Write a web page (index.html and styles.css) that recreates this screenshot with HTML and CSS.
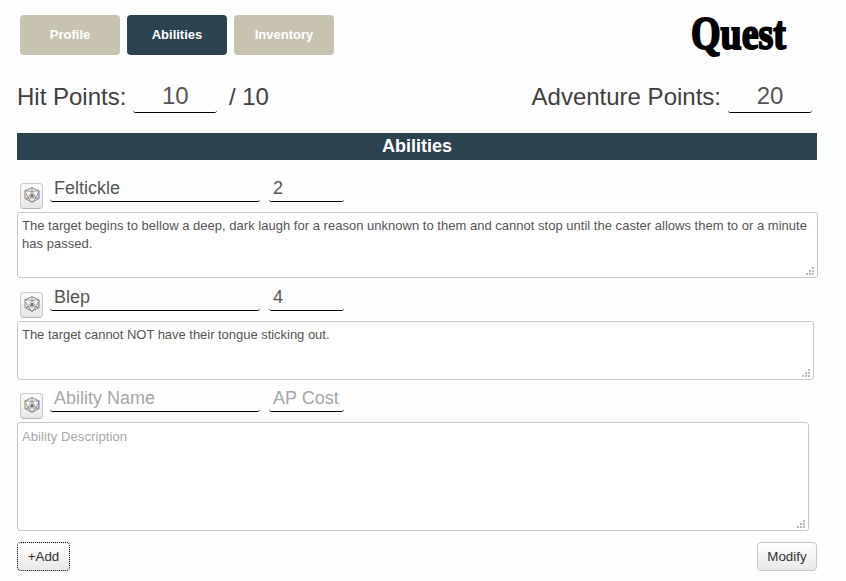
FILE: index.html
```html
<!DOCTYPE html>
<html lang="en">
<head>
<meta charset="utf-8">
<title>Quest</title>
<link rel="stylesheet" href="styles.css">
</head>
<body>
<svg class="defs" aria-hidden="true">
  <symbol id="die" viewBox="0 0 16 16">
    <g fill="none" stroke-width=".8">
      <path stroke="#666" d="M8 .7 15 3.8v7.7L8 15.3 1 11.5V3.8Z"/>
      <path stroke="#858585" d="M8 .7v3.6M1 3.8l7 .5 7-.5M8 4.3 4 11h8ZM1 3.8 4 11l-3 .5M15 3.8 12 11l3 .5M4 11l4 4.3 4-4.3"/>
      <path stroke="#d8c860" d="M1.5 4.5v6.5"/>
      <path stroke="#8890e8" d="M14.5 4.5v6.5"/>
      <path fill="#777" stroke="#555" d="M8 7 6.5 9.6h3Z"/>
    </g>
  </symbol>
  <symbol id="grip" viewBox="0 0 8 8">
    <path fill="#b8b8b8" d="M6 0h2v2H6zM3 3h2v2H3zM6 3h2v2H6zM0 6h2v2H0zM3 6h2v2H3zM6 6h2v2H6z"/>
  </symbol>
</svg>
<main class="sheet">
  <header class="top">
    <nav class="tabs">
      <a class="tab">Profile</a>
      <a class="tab active">Abilities</a>
      <a class="tab">Inventory</a>
    </nav>
    <svg class="logo" viewBox="0 0 98 46" role="img" aria-label="Quest">
      <text x="1" y="34" textLength="95" lengthAdjust="spacingAndGlyphs">Quest</text>
    </svg>
  </header>
  <section class="points">
    <div class="stat"><span>Hit Points:</span><span class="value">10</span><span class="max">/ 10</span></div>
    <div class="stat"><span>Adventure Points:</span><span class="value">20</span></div>
  </section>
  <h1 class="title">Abilities</h1>
  <section class="ability first">
    <div class="row">
      <button class="roll"><svg><use href="#die"/></svg></button>
      <span class="field name">Feltickle</span><span class="field cost">2</span>
    </div>
    <div class="description tall">The target begins to bellow a deep, dark laugh for a reason unknown to them and cannot stop until the caster allows them to or a minute<br>has passed.<svg class="grip"><use href="#grip"/></svg></div>
  </section>
  <section class="ability second">
    <div class="row">
      <button class="roll"><svg><use href="#die"/></svg></button>
      <span class="field name">Blep</span><span class="field cost">4</span>
    </div>
    <div class="description short">The target cannot NOT have their tongue sticking out.<svg class="grip"><use href="#grip"/></svg></div>
  </section>
  <section class="ability third">
    <div class="row">
      <button class="roll"><svg><use href="#die"/></svg></button>
      <span class="field name empty">Ability Name</span><span class="field cost empty">AP Cost</span>
    </div>
    <div class="description blank empty">Ability Description<svg class="grip"><use href="#grip"/></svg></div>
  </section>
  <footer class="actions">
    <button class="btn add">+Add</button>
    <button class="btn modify">Modify</button>
  </footer>
</main>
</body>
</html>
```
FILE: styles.css
```css
* { box-sizing: border-box; }
body {
  margin: 0;
  background: #fefefe;
  color: #404040;
  font-family: "Liberation Sans", Arial, sans-serif;
}
.defs { display: none; }
.sheet { width: 801px; margin-left: 17px; }
.top {
  display: flex;
  justify-content: space-between;
  height: 70px;
  padding: 15px 30px 0 3px;
}
.tabs { display: flex; gap: 7px; }
.tab {
  width: 100px;
  height: 40px;
  border-radius: 4px;
  background: #c8c2b0;
  color: #fff;
  font-size: 13px;
  font-weight: bold;
  line-height: 39px;
  text-align: center;
}
.tab.active { background: #2c424f; }
.logo { width: 98px; height: 46px; overflow: visible; }
.logo text {
  fill: #000;
  stroke: #000;
  stroke-width: 2px;
  font-family: "Liberation Serif", serif;
  font-size: 46px;
  font-weight: bold;
}
.points {
  display: flex;
  justify-content: space-between;
  height: 63px;
  padding: 11px 6px 0 0;
  font-size: 24px;
  line-height: 32px;
}
.stat { display: flex; }
.value {
  width: 84px;
  height: 32px;
  margin-left: 7px;
  border-bottom: 1px solid #000;
  border-radius: 3px;
  color: #555;
  line-height: 30px;
  text-align: center;
}
.max { margin-left: 11.5px; }
.title {
  width: 800px;
  height: 27px;
  margin: 0;
  background: #2c424f;
  color: #fff;
  font-size: 18px;
  line-height: 26px;
  text-align: center;
}
.first { padding-top: 14px; }
.second { padding-top: 5px; }
.third { padding-top: 4px; }
.row { display: flex; height: 38px; padding-left: 3px; }
.roll {
  display: flex;
  align-items: center;
  justify-content: center;
  width: 23px;
  height: 26px;
  margin: 9px 7px 0 0;
  padding: 0;
  border: 1px solid #c8c8c8;
  border-bottom-color: #b5b5b5;
  border-radius: 4px;
  background: linear-gradient(#fcfcfc, #e6e6e6);
}
.roll svg { flex: none; width: 16px; height: 16px; margin-top: -3px; }
.field {
  height: 28px;
  padding-left: 4px;
  border-bottom: 1px solid #000;
  border-radius: 3px;
  color: #555;
  font-size: 18px;
  line-height: 29px;
  white-space: nowrap;
}
.name { width: 210px; margin-right: 9px; }
.cost { width: 75px; }
.description {
  position: relative;
  padding: 4px;
  border: 1px solid #c8c8c8;
  border-radius: 3px;
  background: #fff;
  color: #555;
  font-size: 13px;
  line-height: 18px;
  white-space: nowrap;
}
.tall { width: 801px; height: 66px; letter-spacing: .017px; }
.short { width: 797px; height: 59px; letter-spacing: -.03px; }
.blank { width: 792px; height: 109px; padding-top: 5px; letter-spacing: .09px; }
.empty { color: #a6a6a6; }
.grip { position: absolute; right: 3px; bottom: 2px; width: 8px; height: 8px; }
.actions {
  display: flex;
  justify-content: space-between;
  width: 800px;
  padding-top: 11px;
}
.btn {
  height: 29px;
  padding: 0;
  border: 1px solid #c8c8c8;
  border-radius: 4px;
  background: linear-gradient(#fff, #e8e8e8);
  color: #333;
  font: 13.33px/25px "Liberation Sans", Arial, sans-serif;
}
.add { width: 53px; border: 1px dotted #000; }
.modify { width: 60px; }
```
